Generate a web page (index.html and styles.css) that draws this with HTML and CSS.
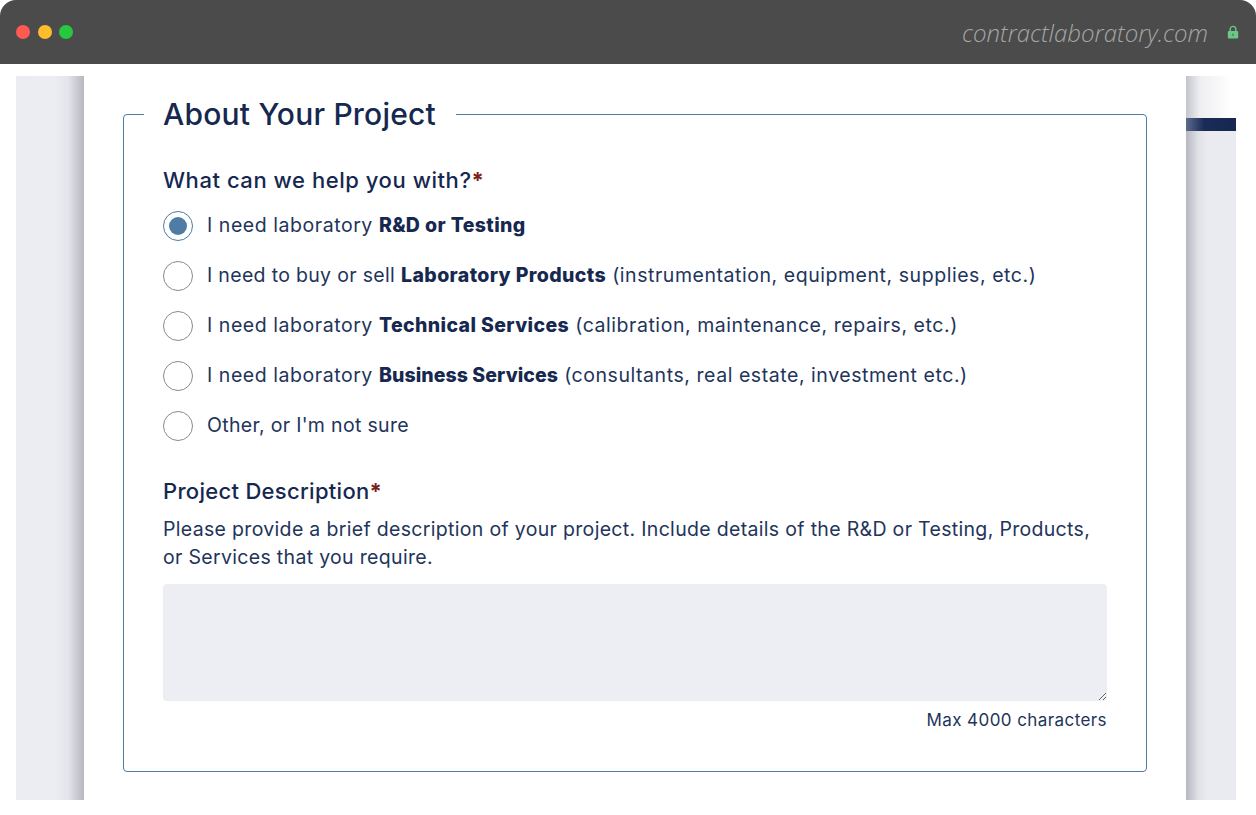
FILE: index.html
```html
<!DOCTYPE html>
<html lang="en">
<head>
<meta charset="utf-8">
<title>About Your Project</title>
<link rel="stylesheet" href="styles.css">
</head>
<body>
<div class="window">
  <header class="titlebar">
    <div class="lights">
      <span class="light red"></span>
      <span class="light yellow"></span>
      <span class="light green"></span>
    </div>
    <div class="address">
      <span class="domain">contractlaboratory.com</span>
      <svg class="lock" width="12" height="14" viewBox="0 0 12 14" aria-hidden="true">
        <path d="M3.2 6.5V4.2a2.8 2.8 0 0 1 5.6 0v2.3" fill="none" stroke="#6cc687" stroke-width="1.4"/>
        <rect x="0.8" y="6" width="10.4" height="7.6" rx="1" fill="#6cc687"/>
        <rect x="5.4" y="8.6" width="1.2" height="2.4" fill="#3f7a52"/>
      </svg>
    </div>
  </header>
  <div class="viewport">
    <div class="gutter-left"></div>
    <main class="card">
      <form class="form">
        <fieldset class="group">
          <legend class="legend">About Your Project</legend>
          <div class="question">What can we help you with?<span class="req">*</span></div>
          <div class="options">
            <label class="option"><span class="radio checked"></span><span>I need laboratory <b>R&amp;D or Testing</b></span></label>
            <label class="option"><span class="radio"></span><span><span class="tight">I need to buy or sell</span> <b>Laboratory Products</b> (instrumentation, equipment, supplies, etc.)</span></label>
            <label class="option"><span class="radio"></span><span>I need laboratory <b>Technical Services</b> (calibration, maintenance, repairs, etc.)</span></label>
            <label class="option"><span class="radio"></span><span>I need laboratory <b class="tight-bold">Business Services</b> (consultants, real estate, investment etc.)</span></label>
            <label class="option"><span class="radio"></span><span class="tight">Other, or I'm not sure</span></label>
          </div>
          <div class="question second">Project Description<span class="req">*</span></div>
          <p class="hint">Please provide a brief description of your project. Include details of the R&amp;D or Testing, Products, or Services that you require.</p>
          <textarea class="textarea" aria-label="Project Description"></textarea>
          <div class="max">Max 4000 characters</div>
        </fieldset>
      </form>
    </main>
    <div class="gutter-right">
      <div class="right-top"></div>
      <div class="right-bar"></div>
      <div class="right-rest"></div>
    </div>
  </div>
</div>
</body>
</html>
```
FILE: styles.css
```css
* { box-sizing: border-box; }
html, body { margin: 0; height: 100%; background: #fff; }
body { font-family: "Inter", "Liberation Sans", sans-serif; color: #16284f; overflow: hidden; }
.window { width: 1256px; height: 815px; background: #fff; }
.titlebar {
  height: 64px;
  background: #4b4b4b;
  border-radius: 16px 16px 0 0;
  display: flex;
  align-items: center;
  justify-content: space-between;
  padding: 0 17px 0 16px;
}
.lights { display: flex; gap: 7.5px; }
.light { width: 14px; height: 14px; border-radius: 50%; }
.red { background: #ff5a52; }
.yellow { background: #ffbd2e; }
.green { background: #27c840; }
.address { display: flex; align-items: center; gap: 19px; }
.domain { font-family: "Open Sans", sans-serif; font-style: italic; font-weight: 300; font-size: 24px; line-height: 36px; padding-top: 2px; color: #a6a6a6; }
.lock { display: block; }
.viewport { display: flex; height: 724px; margin: 12px 20px 0 16px; }
.gutter-left {
  width: 69px;
  background: linear-gradient(to right, #ebecf1 0, #ecedf2 38px, #e4e5ea 52px, #b6b7bf 68px, #fff 68px);
}
.card { width: 1101px; background: #fff; padding: 22px 39px 0 38px; }
.form { margin: 0; }
.group {
  margin: 0;
  padding: 0 39px 0 39px;
  height: 674px;
  border: 1px solid #4e7ca5;
  border-radius: 4px;
  display: block;
  min-width: 0;
}
.legend { font-size: 30px; font-weight: 550; line-height: 30px; padding: 1px 20px 1px 19px; margin-left: -19px; color: #16284f; letter-spacing: 0.2px; }
.question { font-size: 22px; font-weight: 500; line-height: 28px; color: #16284f; margin-top: 36px; letter-spacing: 0.55px; }
.question.second { margin-top: 27px; letter-spacing: 0.3px; }
.req { color: #7c1d1d; font-weight: 700; }
.options { display: flex; flex-direction: column; margin-top: 6px; }
.option { display: flex; align-items: center; gap: 14px; height: 50px; font-size: 19.5px; color: #22345a; letter-spacing: 0.55px; }
.option b { font-weight: 800; color: #16284f; letter-spacing: 0.38px; }
.option .tight { letter-spacing: 0.32px; }
.option .tight-bold { letter-spacing: 0.08px; }
.radio { width: 30px; height: 30px; margin-top: 1px; border: 1.5px solid #8a8a8a; border-radius: 50%; background: #fff; flex: none; display: flex; align-items: center; justify-content: center; }
.radio.checked { border-color: #4e7ca5; }
.radio.checked::after { content: ""; width: 18px; height: 18px; border-radius: 50%; background: #4e7ca5; }
.hint { margin: 10px 0 0; font-size: 19.5px; line-height: 28px; color: #22345a; letter-spacing: 0.32px; }
.textarea { display: block; width: 100%; height: 117px; margin-top: 13px; background: #edeef3; border: 0; border-radius: 4px; outline: 0; }
.max { text-align: right; font-size: 17px; line-height: 20px; margin-top: 9px; color: #22345a; letter-spacing: 0.42px; }
.gutter-right { width: 50px; display: flex; flex-direction: column; }
.right-top { height: 42px; background: linear-gradient(to right, #c4c5cc 0, #efeff2 14px, #f6f6f6 30px, #fff 45px); }
.right-bar { height: 13px; background: linear-gradient(to right, #5c6b8c 0, #1a2b57 18px, #16284f 100%); }
.right-rest { flex: 1; background: linear-gradient(to right, #b6b7bf 0, #e0e1e7 12px, #eaebf0 22px, #eaebf0 100%); }
```
